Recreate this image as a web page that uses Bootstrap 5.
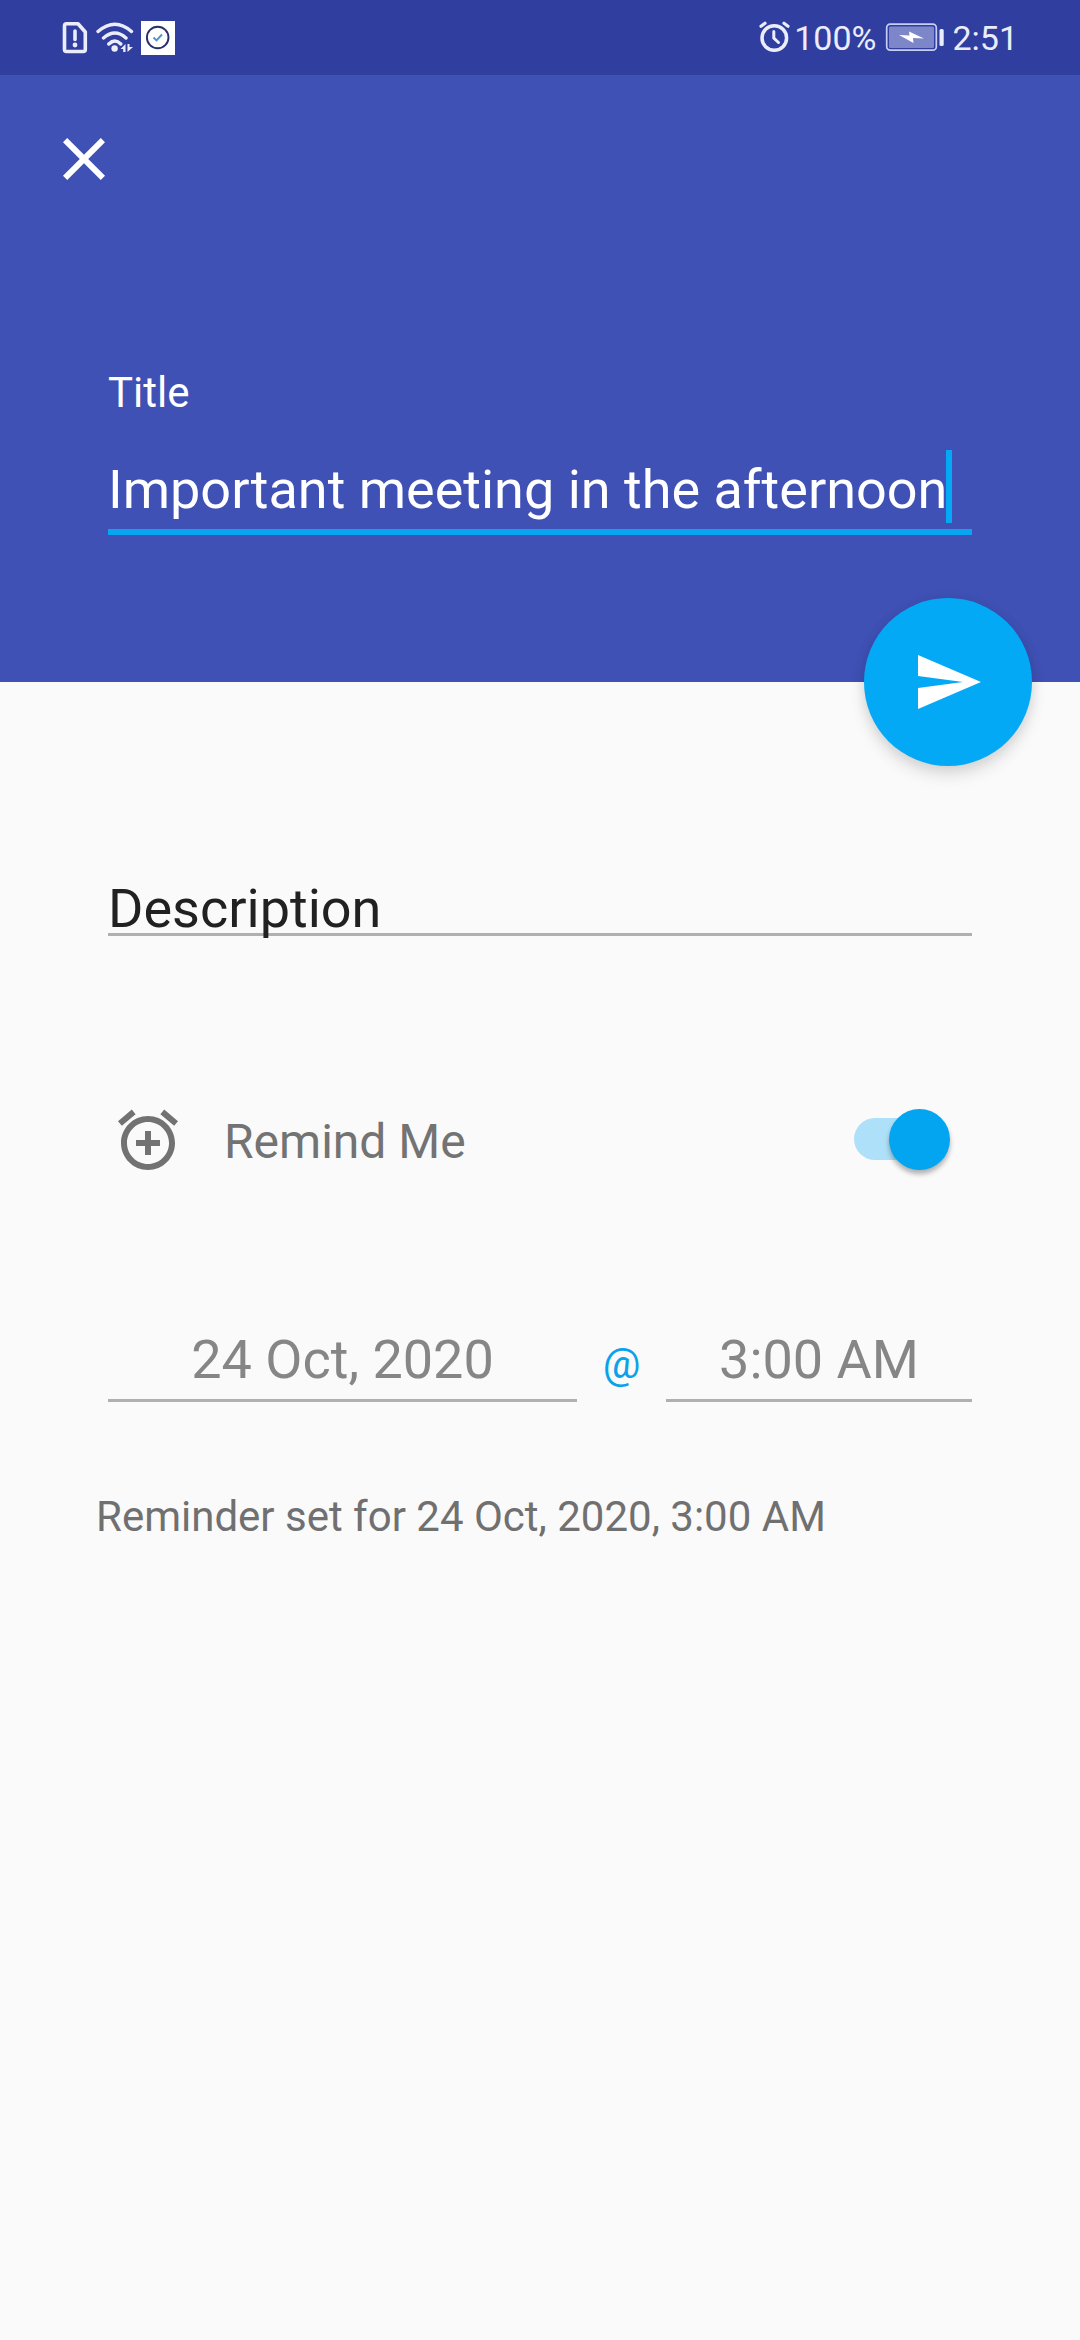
<!DOCTYPE html>
<html lang="en">
<head>
<meta charset="utf-8">
<meta name="viewport" content="width=device-width, initial-scale=1">
<title>New reminder</title>
<link rel="stylesheet" href="https://cdn.jsdelivr.net/npm/bootstrap@5.3.0/dist/css/bootstrap.min.css">
<style>
body{font-family:Roboto,"Noto Sans",sans-serif;background:#fafafa;color:#212121;min-height:2340px;overflow:hidden}
svg{display:block;flex:none}
.status-bar{height:75px;background:#303f9f;color:#ebedfc;font-size:34px;line-height:40px;padding:0 62px}
.status-left{padding-top:21px}
.status-right{padding-top:18px}
.status-right svg{margin-top:3px}
.pct{margin-left:3px}
.battery{margin:0 7px 0 9px}
.app-header{height:607px;background:#3f51b5;padding-top:48px}
.close-btn{margin-left:48px;width:72px;height:72px}
.form-inset{margin:0 108px}
.title-label{margin-top:173px;font-size:42px;line-height:50px}
.title-input{margin-top:32px;height:85px;border-bottom:6px solid #0aa5f2;font-size:54px;line-height:79px}
.caret{width:6px;height:73px;background:#03a9f4;margin-left:-1px}
.fab{right:48px;bottom:-84px;width:168px;height:168px;background:#03a9f4;box-shadow:0 9px 16px rgba(0,0,0,.12),0 1px 12px rgba(0,0,0,.08)}
.field-line{border-bottom:3px solid #b0b0b0;font-size:54px;line-height:63px}
.desc-field{margin-top:195px;height:59px}
.remind-row{margin-top:168px;padding:0 22px 0 4px;height:72px;color:#737373;font-size:48px}
.remind-text{padding:3px 0 0 40px;line-height:56px}
.toggle{width:96px;height:60px}
.toggle-track{left:0;top:8px;width:84px;height:42px;background:#aee1f9}
.toggle-thumb{right:0;top:-1px;width:61px;height:61px;background:#03a5f1;box-shadow:0 4px 5px rgba(0,0,0,.3)}
.when-row{margin-top:152px}
.when-row .field-line{height:74px;color:#868686}
.date-field{width:469px}
.time-field{width:306px}
.at-sign{color:#0ca2ea;font-size:42px;line-height:63px;padding-top:4px}
.summary{margin:90px 96px 0;color:#707070;font-size:42px;line-height:50px}
</style>
</head>
<body>
<div class="status-bar d-flex justify-content-between align-items-start">
  <div class="status-left d-flex">
    <svg width="113" height="35" viewBox="0 0 113 35" fill="none" stroke="#ebedfc">
      <path d="M4.500 2.700H16L23.300 11V28.500Q23.300 30.500 21.300 30.500H4.500Q2.500 30.500 2.500 28.500V4.700Q2.500 2.700 4.500 2.700Z" stroke-width="3.600" stroke-linejoin="round"/>
      <path d="M13 10V18.500" stroke-width="3.600" stroke-linecap="round"/>
      <circle cx="13" cy="24" r="2.400" fill="#ebedfc" stroke="none"/>
      <path d="M36 10.500Q53 -4 69.500 10.500M41.500 17Q53 7 64 17M46.800 23Q53 17 58.800 23" stroke-width="3.400" stroke-linecap="round"/>
      <circle cx="52.600" cy="27.500" r="3.200" fill="#ebedfc" stroke="none"/>
      <path d="M58.500 28L63.500 23V31H61.200V28ZM65.500 31V23H67.500V26H71Z" fill="#ebedfc" stroke="none"/>
      <path d="M79 0H113V34H79Z" fill="#fff" stroke="none"/>
      <circle cx="95.700" cy="16.500" r="10.800" stroke="#26306b" stroke-width="1.900"/>
      <path d="M91.500 16.500L94.500 19.500L100 13.500" stroke="#4e94cf" stroke-width="1.900"/>
    </svg>
  </div>
  <div class="status-right d-flex">
    <svg width="32" height="32" viewBox="0 0 32 32" fill="none" stroke="#ebedfc" stroke-linecap="round">
      <circle cx="15.300" cy="17" r="12.300" stroke-width="3.500"/>
      <path d="M14.800 10.500V17L19.500 21.500" stroke-width="3"/>
      <path d="M2 5.200L6 2.200M29 5.200L25 2.200" stroke-width="3.200"/>
    </svg>
    <span class="pct">100%</span>
    <svg class="battery" width="60" height="32" viewBox="0 0 60 32">
      <rect x="1.700" y="3.200" width="49.600" height="26" rx="3.500" fill="none" stroke="#c8cdf2" stroke-width="1.700"/>
      <rect x="4" y="5.500" width="45" height="21.500" rx="1.500" fill="#7d86c8"/>
      <path d="M14 14L24.500 14.500L24 10.500L39 17.500L28 17L28.500 22Z" fill="#fff"/>
      <rect x="54.500" y="8" width="4.200" height="17" rx="1.500" fill="#ebedfc"/>
    </svg>
    <span class="clock">2:51</span>
  </div>
</div>

<header class="app-header position-relative text-white">
  <div class="close-btn">
    <svg width="72" height="72" viewBox="0 0 24 24" fill="#fff"><path d="M19 6.410L17.590 5 12 10.590 6.410 5 5 6.410 10.590 12 5 17.590 6.410 19 12 13.410 17.590 19 19 17.590 13.410 12z"/></svg>
  </div>
  <div class="form-inset">
    <div class="title-label">Title</div>
    <div class="title-input d-flex align-items-start text-nowrap"><span>Important meeting in the afternoon</span><span class="caret"></span></div>
  </div>
  <div class="fab position-absolute rounded-circle d-flex align-items-center justify-content-center">
    <svg width="72" height="72" viewBox="0 0 24 24" fill="#fff"><path d="M2.010 21L23 12 2.010 3 2 10l15 2-15 2z"/></svg>
  </div>
</header>

<main class="d-flex flex-column">
  <div class="form-inset desc-field field-line">Description</div>
  <div class="form-inset remind-row d-flex align-items-center">
    <svg width="72" height="72" viewBox="0 0 24 24" fill="#727272"><path d="M7.880 3.390L6.600 1.860 2 5.710l1.290 1.530 4.590-3.850zM22 5.720l-4.600-3.860-1.290 1.530 4.600 3.860L22 5.720zM12 4c-4.970 0-9 4.030-9 9s4.020 9 9 9c4.970 0 9-4.030 9-9s-4.030-9-9-9zm0 16c-3.870 0-7-3.130-7-7s3.130-7 7-7 7 3.130 7 7-3.130 7-7 7zm1-11h-2v3H8v2h3v3h2v-3h3v-2h-3V9z"/></svg>
    <span class="remind-text">Remind Me</span>
    <div class="toggle position-relative ms-auto">
      <span class="toggle-track position-absolute rounded-pill"></span>
      <span class="toggle-thumb position-absolute rounded-circle"></span>
    </div>
  </div>
  <div class="form-inset when-row d-flex">
    <div class="date-field field-line text-center">24 Oct, 2020</div>
    <div class="at-sign flex-fill text-center">@</div>
    <div class="time-field field-line text-center">3:00 AM</div>
  </div>
  <div class="summary">Reminder set for 24 Oct, 2020, 3:00 AM</div>
</main>
<script src="https://cdn.jsdelivr.net/npm/bootstrap@5.3.0/dist/js/bootstrap.bundle.min.js"></script>
</body>
</html>
